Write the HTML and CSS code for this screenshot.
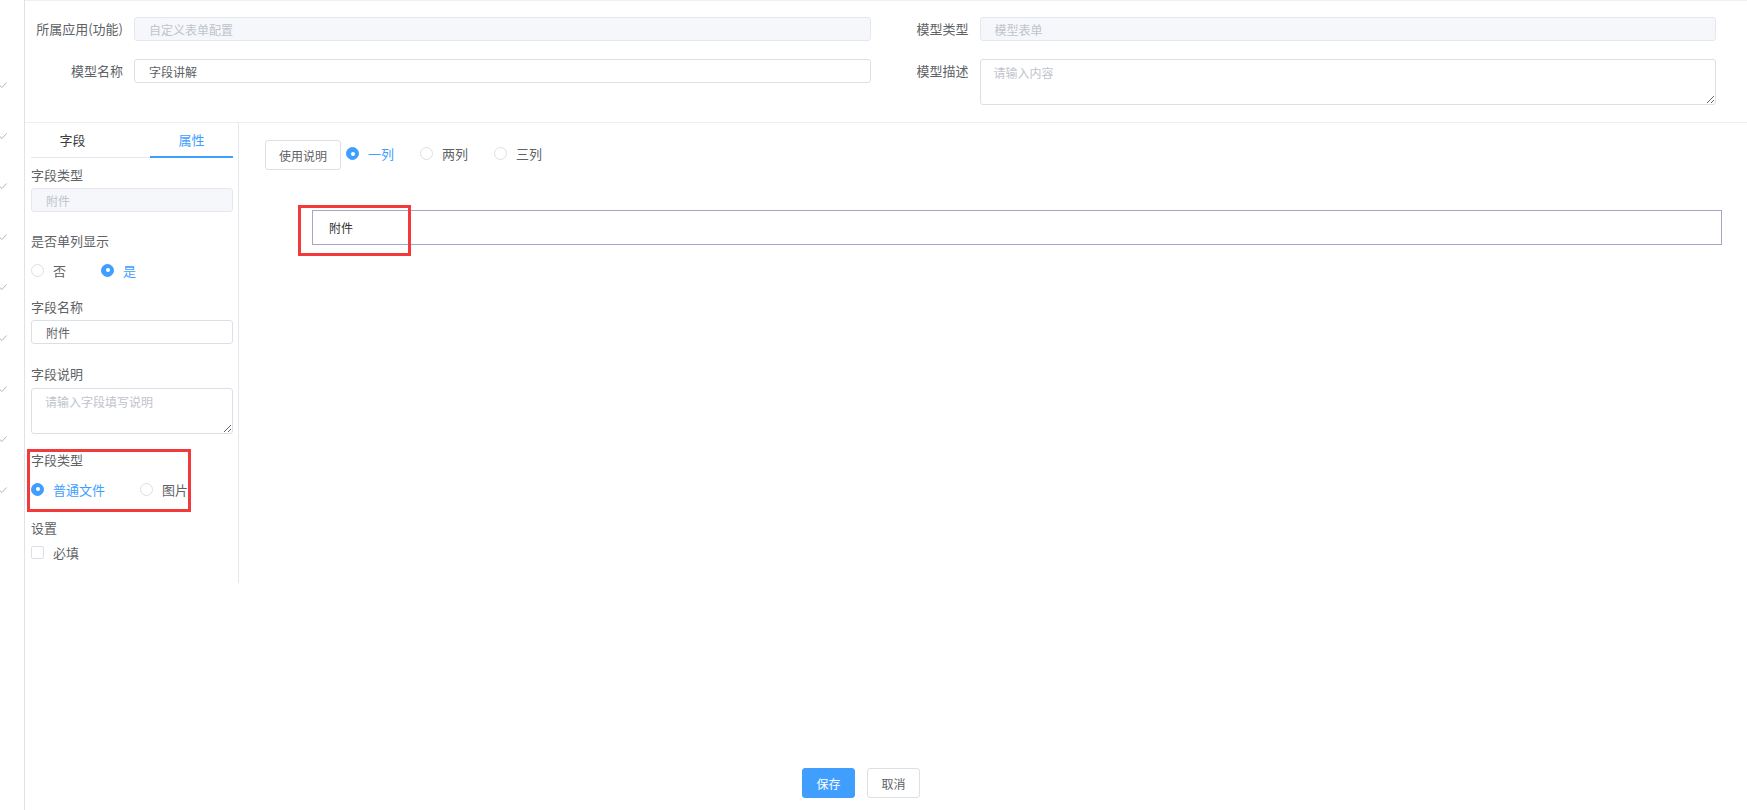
FILE: index.html
```html
<!DOCTYPE html>
<html lang="zh-CN">
<head>
<meta charset="utf-8">
<title>模型配置</title>
<link rel="stylesheet" href="styles.css">
</head>
<body>
<div class="page">
  <aside class="rail">
    <svg class="tick" viewBox="0 0 8 6"><path d="M0.5 3.2 L3 5.5 L7.5 0.5"/></svg>
    <svg class="tick" viewBox="0 0 8 6"><path d="M0.5 3.2 L3 5.5 L7.5 0.5"/></svg>
    <svg class="tick" viewBox="0 0 8 6"><path d="M0.5 3.2 L3 5.5 L7.5 0.5"/></svg>
    <svg class="tick" viewBox="0 0 8 6"><path d="M0.5 3.2 L3 5.5 L7.5 0.5"/></svg>
    <svg class="tick" viewBox="0 0 8 6"><path d="M0.5 3.2 L3 5.5 L7.5 0.5"/></svg>
    <svg class="tick" viewBox="0 0 8 6"><path d="M0.5 3.2 L3 5.5 L7.5 0.5"/></svg>
    <svg class="tick" viewBox="0 0 8 6"><path d="M0.5 3.2 L3 5.5 L7.5 0.5"/></svg>
    <svg class="tick" viewBox="0 0 8 6"><path d="M0.5 3.2 L3 5.5 L7.5 0.5"/></svg>
    <svg class="tick" viewBox="0 0 8 6"><path d="M0.5 3.2 L3 5.5 L7.5 0.5"/></svg>
  </aside>

  <div class="main">
    <div class="header">
      <div class="form-item">
        <label class="lbl">所属应用(功能)</label>
        <input class="input is-disabled" disabled value="自定义表单配置">
      </div>
      <div class="form-item">
        <label class="lbl">模型类型</label>
        <input class="input is-disabled" disabled value="模型表单">
      </div>
      <div class="form-item">
        <label class="lbl">模型名称</label>
        <input class="input" value="字段讲解">
      </div>
      <div class="form-item">
        <label class="lbl">模型描述</label>
        <textarea class="textarea desc" placeholder="请输入内容"></textarea>
      </div>
    </div>

    <div class="body">
      <div class="panel">
        <div class="tabs">
          <div class="tab">字段</div>
          <div class="tab active">属性</div>
        </div>

        <div class="fld f1">
          <div class="plabel">字段类型</div>
          <input class="input full is-disabled ctl-3" disabled value="附件">
        </div>

        <div class="fld f2">
          <div class="plabel">是否单列显示</div>
          <div class="radios ctl-10">
            <span class="radio"><span class="dot"></span>否</span>
            <span class="radio on"><span class="dot"></span>是</span>
          </div>
        </div>

        <div class="fld f3">
          <div class="plabel">字段名称</div>
          <input class="input full ctl-3" value="附件">
        </div>

        <div class="fld f4">
          <div class="plabel">字段说明</div>
          <textarea class="textarea full side-ta" placeholder="请输入字段填写说明"></textarea>
        </div>

        <div class="fld f5 annotated">
          <div class="plabel">字段类型</div>
          <div class="radios ctl-10">
            <span class="radio on"><span class="dot"></span>普通文件</span>
            <span class="radio"><span class="dot"></span>图片</span>
          </div>
          <span class="annot annot-side"></span>
        </div>

        <div class="fld f6">
          <div class="plabel">设置</div>
          <div class="checkrow">
            <span class="check"></span>必填
          </div>
        </div>
      </div>

      <div class="canvas">
        <div class="toolbar">
          <button class="btn-plain">使用说明</button>
          <div class="radios tb-radios">
            <span class="radio tb on"><span class="dot"></span>一列</span>
            <span class="radio tb"><span class="dot"></span>两列</span>
            <span class="radio tb"><span class="dot"></span>三列</span>
          </div>
        </div>
        <div class="cell-row">
          附件
          <span class="annot annot-cell"></span>
        </div>
      </div>
    </div>

    <div class="footer">
      <button class="btn primary">保存</button>
      <button class="btn">取消</button>
    </div>
  </div>
</div>
</body>
</html>
```

FILE: styles.css
```css
* { box-sizing: border-box; }

html, body {
  margin: 0;
  padding: 0;
  background: #ffffff;
}

body {
  font-family: "Noto Sans CJK SC", "Noto Sans", sans-serif;
  color: #606266;
  font-size: 13px;
}

.page {
  display: flex;
  height: 100vh;
  overflow: hidden;
}

/* left rail with partially visible ticks */
.rail {
  width: 25px;
  flex: none;
  border-right: 1px solid #e2e2e2;
  display: flex;
  flex-direction: column;
  align-items: flex-start;
  gap: 44.6px;
  padding-top: 82px;
  overflow: hidden;
}

.tick {
  width: 8px;
  height: 6px;
  margin-left: -1px;
  fill: none;
  stroke: #a9acb3;
  stroke-width: 0.9;
}

.main {
  flex: 1;
  min-width: 0;
  display: flex;
  flex-direction: column;
  border-top: 1px solid #efefef;
}

/* header form */
.header {
  display: grid;
  grid-template-columns: 1fr 1fr;
  row-gap: 18px;
  align-items: start;
  padding: 16px 31px 17px 0;
  border-bottom: 1px solid #ebeef5;
}

.form-item {
  display: flex;
  align-items: flex-start;
}

.lbl {
  width: 109px;
  flex: none;
  padding-right: 11px;
  text-align: right;
  font-size: 13px;
  line-height: 24px;
  color: #606266;
}

.input {
  flex: 1;
  min-width: 0;
  height: 24px;
  border: 1px solid #dcdfe6;
  border-radius: 3px;
  padding: 0 14px;
  font-family: "Noto Sans CJK SC", "Noto Sans", sans-serif;
  font-size: 12px;
  line-height: 22px;
  color: #606266;
  background: #ffffff;
  outline: none;
}

.input.is-disabled {
  background: #f5f7fa;
  border-color: #e4e7ed;
  color: #c0c4cc;
  -webkit-text-fill-color: #c0c4cc;
  opacity: 1;
}

.textarea {
  flex: 1;
  min-width: 0;
  border: 1px solid #dcdfe6;
  border-radius: 3px;
  padding: 4px 13px;
  font-family: "Noto Sans CJK SC", "Noto Sans", sans-serif;
  font-size: 12px;
  line-height: 18px;
  color: #606266;
  background: #ffffff;
  outline: none;
  resize: vertical;
  display: block;
}

.textarea::placeholder,
.input::placeholder {
  color: #c0c4cc;
}

.textarea.desc {
  height: 46px;
}

/* body */
.body {
  flex: 1;
  display: flex;
  align-items: flex-start;
  min-height: 0;
}

.panel {
  width: 214px;
  flex: none;
  border-right: 1px solid #e4e7ed;
  padding: 0 5px 21px 6px;
}

.tabs {
  display: flex;
  justify-content: space-between;
  border-bottom: 1px solid #e4e7ed;
}

.tab {
  width: 83px;
  height: 34px;
  line-height: 34px;
  text-align: center;
  font-size: 13px;
  color: #3a3c40;
}

.tab.active {
  color: #409eff;
  border-bottom: 2px solid #409eff;
  height: 35px;
  margin-bottom: -1px;
}

.plabel {
  font-size: 13px;
  line-height: 20px;
  color: #606266;
}

.fld { position: relative; }
.f1 { margin-top: 7px; }
.f2 { margin-top: 19px; }
.f3 { margin-top: 17px; }
.f4 { margin-top: 20px; }
.f5 { margin-top: 16px; }
.f6 { margin-top: 19px; }

.input.full,
.textarea.full {
  width: 100%;
  display: block;
}

.ctl-3 { margin-top: 3px; }
.ctl-10 { margin-top: 9px; }

.side-ta {
  margin-top: 4px;
  height: 46px;
}

.radios {
  display: flex;
  align-items: center;
  height: 20px;
}

.tb-radios {
  margin-bottom: 3px;
}

.radio {
  display: flex;
  align-items: center;
  margin-right: 35px;
  font-size: 13px;
  color: #606266;
  white-space: nowrap;
}

.radio.tb {
  margin-right: 26px;
}

.dot {
  position: relative;
  width: 13px;
  height: 13px;
  border: 1px solid #dcdfe6;
  border-radius: 50%;
  background: #ffffff;
  margin-right: 9px;
  flex: none;
}

.radio.on { color: #409eff; }

.radio.on .dot {
  background: #409eff;
  border-color: #409eff;
}

.radio.on .dot::after {
  content: "";
  position: absolute;
  left: 50%;
  top: 50%;
  width: 4px;
  height: 4px;
  margin: -2px 0 0 -2px;
  border-radius: 50%;
  background: #ffffff;
}

.checkrow {
  display: flex;
  align-items: center;
  height: 20px;
  margin-top: 4px;
  font-size: 13px;
  color: #606266;
}

.check {
  width: 13px;
  height: 13px;
  border: 1px solid #dcdfe6;
  border-radius: 2px;
  margin-right: 9px;
  background: #ffffff;
}

/* annotation boxes drawn over the content */
.annot {
  position: absolute;
  border: 3px solid #f33a3a;
  pointer-events: none;
}

.annot-side {
  left: -4px;
  top: -1px;
  width: 164px;
  height: 63px;
}

.annot-cell {
  left: -15px;
  top: -6px;
  width: 113px;
  height: 51px;
}

/* canvas */
.canvas {
  flex: 1;
  min-width: 0;
  padding: 17px 25px 0 26px;
}

.toolbar {
  display: flex;
  align-items: center;
}

.btn-plain {
  height: 30px;
  padding: 0 13px;
  border: 1px solid #dcdfe6;
  border-radius: 3px;
  background: #ffffff;
  color: #606266;
  font-family: "Noto Sans CJK SC", "Noto Sans", sans-serif;
  font-size: 12px;
  margin-right: 5px;
}

.cell-row {
  position: relative;
  margin: 40px 0 0 47px;
  height: 35px;
  border: 1px solid #a3a6c9;
  padding-left: 16px;
  font-size: 12px;
  line-height: 33px;
  color: #303133;
}

/* footer */
.footer {
  display: flex;
  justify-content: center;
  gap: 12px;
  padding: 0 50px 12px 0;
}

.btn {
  width: 53px;
  height: 30px;
  padding: 0;
  border: 1px solid #dcdfe6;
  border-radius: 3px;
  background: #ffffff;
  color: #606266;
  font-family: "Noto Sans CJK SC", "Noto Sans", sans-serif;
  font-size: 12px;
}

.btn.primary {
  background: #409eff;
  border-color: #409eff;
  color: #ffffff;
}
```
